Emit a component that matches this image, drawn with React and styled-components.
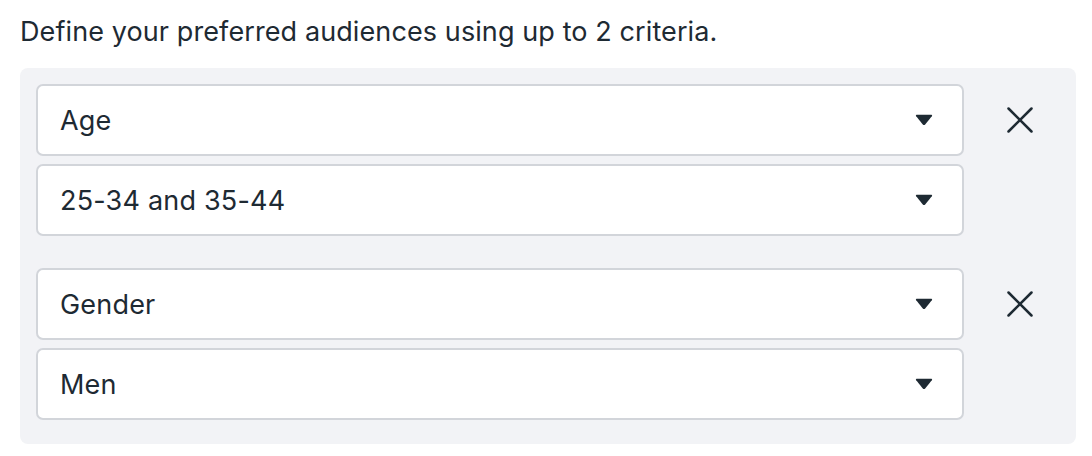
import React from 'react'
import styled, { createGlobalStyle } from 'styled-components'

const GlobalStyle = createGlobalStyle`
  body {
    margin: 0;
    background: #ffffff;
    font-family: Inter, "Liberation Sans", sans-serif;
    color: #1e2a33;
  }
`

const criteria = [
  { field: 'Age', value: '25-34 and 35-44' },
  { field: 'Gender', value: 'Men' },
]

function Caret() {
  return (
    <svg width="18" height="12" viewBox="0 0 18 12">
      <path
        d="M1.8 0.8 H16.2 Q17.9 0.8 16.8 2.2 L10.2 10.4 Q9 11.7 7.8 10.4 L1.2 2.2 Q0.1 0.8 1.8 0.8 Z"
        fill="#1e2a33"
      />
    </svg>
  )
}

function CloseIcon() {
  return (
    <svg width="26" height="26" viewBox="0 0 26 26">
      <path
        d="M1.5 1.5 L24.5 24.5 M24.5 1.5 L1.5 24.5"
        stroke="#1e2a33"
        strokeWidth="2.5"
        strokeLinecap="round"
      />
    </svg>
  )
}

function Select({ label }) {
  return (
    <SelectBox>
      <span>{label}</span>
      <Caret />
    </SelectBox>
  )
}

export default function App() {
  return (
    <Page>
      <GlobalStyle />
      <Heading>Define your preferred audiences using up to 2 criteria.</Heading>
      <Panel>
        {criteria.map((c) => (
          <Group key={c.field}>
            <Fields>
              <Select label={c.field} />
              <Select label={c.value} />
            </Fields>
            <RemoveButton aria-label="Remove">
              <CloseIcon />
            </RemoveButton>
          </Group>
        ))}
      </Panel>
    </Page>
  )
}

const Page = styled.div`
  padding: 15px 16px 12px 20px;
`

const Heading = styled.p`
  margin: 0 0 19px;
  font-size: 27px;
  line-height: 34px;
  letter-spacing: 0.1px;
`

const Panel = styled.div`
  background: #f2f3f6;
  border-radius: 8px;
  padding: 16px 16px 24px;
  display: flex;
  flex-direction: column;
  gap: 32px;
`

const Group = styled.div`
  display: grid;
  grid-template-columns: 1fr 96px;
`

const Fields = styled.div`
  display: flex;
  flex-direction: column;
  gap: 8px;
`

const SelectBox = styled.div`
  height: 72px;
  box-sizing: border-box;
  background: #ffffff;
  border: 2px solid #d2d5da;
  border-radius: 7px;
  padding: 0 29px 0 22px;
  display: flex;
  align-items: center;
  justify-content: space-between;
  font-size: 27px;
  letter-spacing: 0.2px;
  color: #1e2a33;
`

const RemoveButton = styled.button`
  height: 72px;
  border: 0;
  background: none;
  padding: 0;
  margin-right: -16px;
  display: flex;
  align-items: center;
  justify-content: center;
  cursor: pointer;
`
